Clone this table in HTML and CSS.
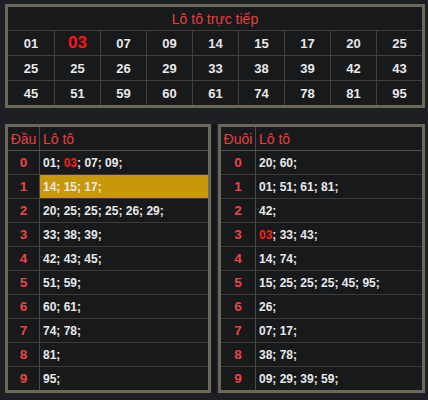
FILE: index.html
```html
<!DOCTYPE html>
<html>
<head>
<meta charset="utf-8">
<link rel="stylesheet" href="styles.css">
</head>
<body>
<div class="page">
  <table class="live">
    <colgroup>
      <col><col><col><col><col><col><col><col><col>
    </colgroup>
    <tr><td class="title" colspan="9">Lô tô trực tiếp</td></tr>
    <tr><td>01</td><td class="hot">03</td><td>07</td><td>09</td><td>14</td><td>15</td><td>17</td><td>20</td><td>25</td></tr>
    <tr><td>25</td><td>25</td><td>26</td><td>29</td><td>33</td><td>38</td><td>39</td><td>42</td><td>43</td></tr>
    <tr><td>45</td><td>51</td><td>59</td><td>60</td><td>61</td><td>74</td><td>78</td><td>81</td><td>95</td></tr>
  </table>

  <div class="pair">
    <table class="lt dau">
      <tr><th class="k">Đầu</th><th>Lô tô</th></tr>
      <tr><td class="k">0</td><td>01; <span class="red">03</span>; 07; 09;</td></tr>
      <tr><td class="k">1</td><td class="mark">14; 15; 17;</td></tr>
      <tr><td class="k">2</td><td>20; 25; 25; 25; 26; 29;</td></tr>
      <tr><td class="k">3</td><td>33; 38; 39;</td></tr>
      <tr><td class="k">4</td><td>42; 43; 45;</td></tr>
      <tr><td class="k">5</td><td>51; 59;</td></tr>
      <tr><td class="k">6</td><td>60; 61;</td></tr>
      <tr><td class="k">7</td><td>74; 78;</td></tr>
      <tr><td class="k">8</td><td>81;</td></tr>
      <tr><td class="k">9</td><td>95;</td></tr>
    </table>
    <div class="sep"></div>
    <table class="lt duoi">
      <tr><th class="k">Đuôi</th><th>Lô tô</th></tr>
      <tr><td class="k">0</td><td>20; 60;</td></tr>
      <tr><td class="k">1</td><td>01; 51; 61; 81;</td></tr>
      <tr><td class="k">2</td><td>42;</td></tr>
      <tr><td class="k">3</td><td><span class="red">03</span>; 33; 43;</td></tr>
      <tr><td class="k">4</td><td>14; 74;</td></tr>
      <tr><td class="k">5</td><td>15; 25; 25; 25; 45; 95;</td></tr>
      <tr><td class="k">6</td><td>26;</td></tr>
      <tr><td class="k">7</td><td>07; 17;</td></tr>
      <tr><td class="k">8</td><td>38; 78;</td></tr>
      <tr><td class="k">9</td><td>09; 29; 39; 59;</td></tr>
    </table>
  </div>
</div>
</body>
</html>
```

FILE: styles.css
```css
html, body {
  margin: 0;
  padding: 0;
  background: #1e1f22;
}
body {
  font-family: "Liberation Sans", Arial, sans-serif;
  color: #e8e9eb;
}
.page {
  padding: 4px 3px 0 5px;
  width: 420px;
}
table {
  border-collapse: separate;
  border-spacing: 0;
  background: #18191b;
  border: 3px solid #6c6758;
}
td, th {
  padding: 0;
}
.live {
  width: 420px;
  table-layout: fixed;
}
.live td {
  height: 24px;
  text-align: center;
  font-weight: bold;
  font-size: 13px;
  border-top: 1px solid #3e3f41;
  border-left: 1px solid #3e3f41;
}
.live td:first-child {
  border-left: none;
}
.live tr:first-child td {
  border-top: none;
}
.live td.title {
  height: 23px;
  font-weight: normal;
  font-size: 14px;
  color: #ec3e3e;
  padding-top: 0;
}
.live td.hot {
  color: #ff1414;
  font-weight: bold;
  font-size: 17px;
}
.pair {
  display: flex;
  margin-top: 16px;
}
.sep {
  width: 7px;
  background: linear-gradient(to right, #1e1f22 0 1px, #141517 1px 5px, #1e1f22 5px);
}
.lt {
  table-layout: fixed;
}
.dau { width: 206px; }
.duoi { width: 207px; }
.lt th {
  height: 23px;
  font-weight: normal;
  font-size: 14px;
  color: #ec3e3e;
  text-align: left;
  padding-left: 3px;
  border-left: 1px solid #4a4a4a;
  border-bottom: 1px solid #55544f;
}
.lt th.k {
  padding-left: 0;
  text-align: center;
  border-left: none;
}
.dau .k { width: 31px; }
.duoi .k { width: 34px; }
.lt td {
  height: 23px;
  font-weight: bold;
  font-size: 12px;
  padding-left: 3px;
  border-left: 1px solid #4a4a4a;
  border-bottom: 1px solid #3a3b3d;
  white-space: nowrap;
}
.lt tr:last-child td {
  border-bottom: none;
}
.lt td.k {
  padding-left: 0;
  text-align: center;
  color: #ec4444;
  font-size: 13.5px;
  border-left: none;
}
.lt td.mark {
  background: #c9980a;
}
.red {
  color: #ff1c1c;
}
```
